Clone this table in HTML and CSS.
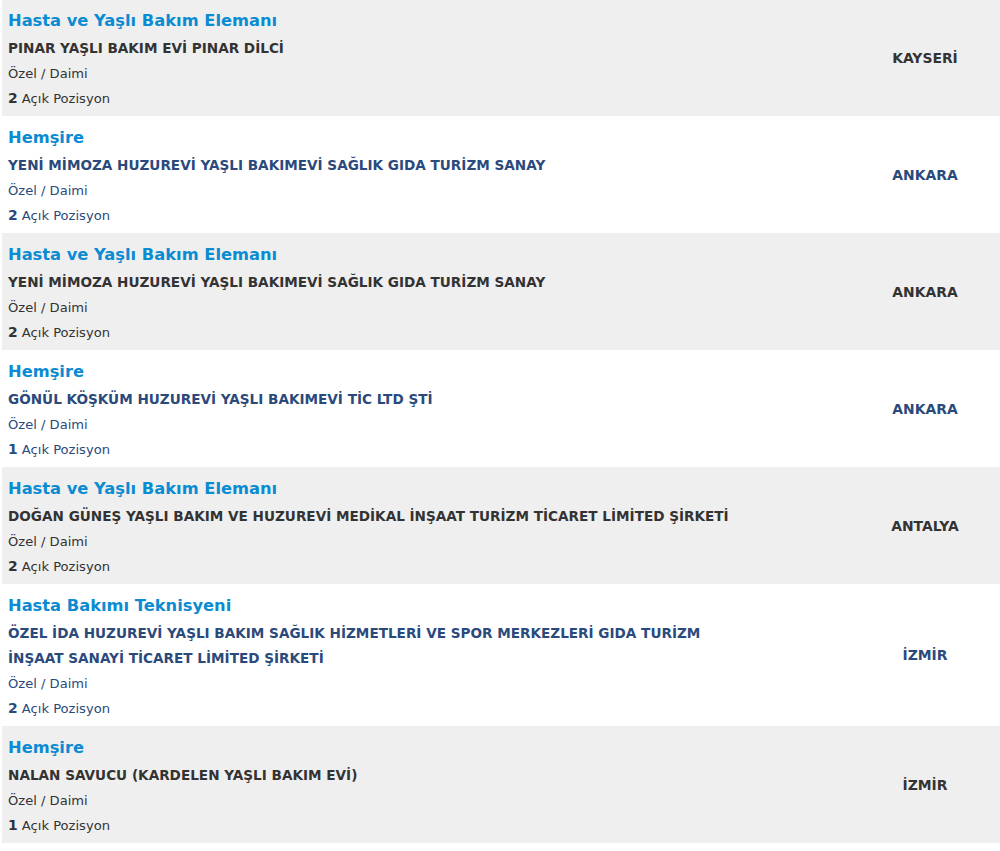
FILE: index.html
```html
<!DOCTYPE html>
<html lang="tr">
<head>
<meta charset="utf-8">
<title>İlanlar</title>
<link rel="stylesheet" href="styles.css">
</head>
<body>
<ul class="jobs">
  <li class="job odd">
    <div class="info">
      <a class="title">Hasta ve Yaşlı Bakım Elemanı</a>
      <div class="company">PINAR YAŞLI BAKIM EVİ PINAR DİLCİ</div>
      <div class="meta">Özel / Daimi</div>
      <div class="meta"><b>2</b> Açık Pozisyon</div>
    </div>
    <div class="city">KAYSERİ</div>
  </li>
  <li class="job even">
    <div class="info">
      <a class="title">Hemşire</a>
      <div class="company">YENİ MİMOZA HUZUREVİ YAŞLI BAKIMEVİ SAĞLIK GIDA TURİZM SANAY</div>
      <div class="meta">Özel / Daimi</div>
      <div class="meta"><b>2</b> Açık Pozisyon</div>
    </div>
    <div class="city">ANKARA</div>
  </li>
  <li class="job odd">
    <div class="info">
      <a class="title">Hasta ve Yaşlı Bakım Elemanı</a>
      <div class="company">YENİ MİMOZA HUZUREVİ YAŞLI BAKIMEVİ SAĞLIK GIDA TURİZM SANAY</div>
      <div class="meta">Özel / Daimi</div>
      <div class="meta"><b>2</b> Açık Pozisyon</div>
    </div>
    <div class="city">ANKARA</div>
  </li>
  <li class="job even">
    <div class="info">
      <a class="title">Hemşire</a>
      <div class="company">GÖNÜL KÖŞKÜM HUZUREVİ YAŞLI BAKIMEVİ TİC LTD ŞTİ</div>
      <div class="meta">Özel / Daimi</div>
      <div class="meta"><b>1</b> Açık Pozisyon</div>
    </div>
    <div class="city">ANKARA</div>
  </li>
  <li class="job odd">
    <div class="info">
      <a class="title">Hasta ve Yaşlı Bakım Elemanı</a>
      <div class="company">DOĞAN GÜNEŞ YAŞLI BAKIM VE HUZUREVİ MEDİKAL İNŞAAT TURİZM TİCARET LİMİTED ŞİRKETİ</div>
      <div class="meta">Özel / Daimi</div>
      <div class="meta"><b>2</b> Açık Pozisyon</div>
    </div>
    <div class="city">ANTALYA</div>
  </li>
  <li class="job even">
    <div class="info">
      <a class="title">Hasta Bakımı Teknisyeni</a>
      <div class="company">ÖZEL İDA HUZUREVİ YAŞLI BAKIM SAĞLIK HİZMETLERİ VE SPOR MERKEZLERİ GIDA TURİZM İNŞAAT SANAYİ TİCARET LİMİTED ŞİRKETİ</div>
      <div class="meta">Özel / Daimi</div>
      <div class="meta"><b>2</b> Açık Pozisyon</div>
    </div>
    <div class="city">İZMİR</div>
  </li>
  <li class="job odd">
    <div class="info">
      <a class="title">Hemşire</a>
      <div class="company">NALAN SAVUCU (KARDELEN YAŞLI BAKIM EVİ)</div>
      <div class="meta">Özel / Daimi</div>
      <div class="meta"><b>1</b> Açık Pozisyon</div>
    </div>
    <div class="city">İZMİR</div>
  </li>
</ul>
</body>
</html>
```

FILE: styles.css
```css
html, body {
  margin: 0;
  padding: 0;
  background: #ffffff;
}
body {
  font-family: "DejaVu Sans", Verdana, sans-serif;
}
.jobs {
  list-style: none;
  margin: -1px 0 0 2px;
  padding: 0;
}
.job {
  display: flex;
  align-items: center;
  min-height: 117px;
  box-sizing: border-box;
  padding: 0 0 0 6px;
}
.job.odd {
  background: #efefef;
  color: #333333;
}
.job.even {
  background: #ffffff;
  color: #2b4a7c;
}
.info {
  flex: 1;
  min-width: 0;
  padding: 9px 100px 5px 0;
}
.title {
  display: block;
  font-size: 16.3px;
  font-weight: bold;
  line-height: 25px;
  margin-bottom: 3px;
  color: #0a8bd2;
  text-decoration: none;
}
.company {
  font-size: 13.6px;
  font-weight: bold;
  line-height: 25px;
}
.meta {
  font-size: 13.1px;
  line-height: 25px;
}
.meta b {
  font-size: 13.9px;
  font-weight: bold;
}
.city {
  width: 150px;
  flex: none;
  text-align: center;
  font-size: 13.9px;
  font-weight: bold;
}
```
